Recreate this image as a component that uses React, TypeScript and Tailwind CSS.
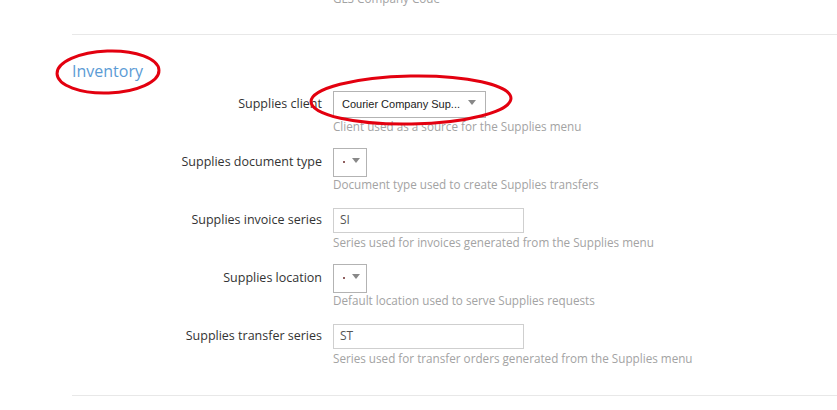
import type { FC, ReactNode } from 'react';

const font = { fontFamily: '"Open Sans", "Liberation Sans", sans-serif' };

const Caret = () => (
  <svg width="8" height="5" viewBox="0 0 8 5" className="shrink-0">
    <path d="M0 0 L8 0 L4 5 Z" fill="#888" />
  </svg>
);

const Row: FC<{ label: string; help: string; children: ReactNode }> = ({ label, help, children }) => (
  <div className="mb-[13px]">
    <div className="flex items-center h-[28px]">
      <div className="w-[251px] pr-[1px] text-right text-[12.5px] text-[#333]">{label}</div>
      <div className="ml-[10px] flex items-center">{children}</div>
    </div>
    <div className="ml-[261px] text-[11.7px] leading-[17px] text-[#a3a3a3]">{help}</div>
  </div>
);

const WideSelect = () => (
  <div className="w-[153px] h-[27px] border border-[#b3b3b3] bg-white flex items-center pl-[8px] pr-[9px]">
    <span className="text-[11px] text-[#222] whitespace-nowrap" style={{ fontFamily: '"Liberation Sans", Arial, sans-serif' }}>
      Courier Company Sup...
    </span>
    <span className="ml-auto -mt-[3px]">
      <Caret />
    </span>
  </div>
);

const SmallSelect = () => (
  <div className="w-[34px] h-[29px] border border-[#b3b3b3] bg-white flex items-start pt-[9px] pl-[9px] gap-[7px]">
    <span className="mt-[3px] w-[2px] h-[2px] bg-[#6b2b2b] rounded-full" />
    <Caret />
  </div>
);

const TextInput: FC<{ value: string }> = ({ value }) => (
  <div className="w-[191px] h-[25px] border border-[#cfcfcf] bg-white flex items-center pl-[6px] text-[12px] text-[#555]">
    {value}
  </div>
);

const App: FC = () => {
  return (
    <div className="relative w-[837px] h-[410px] overflow-hidden bg-white" style={font}>
      <div className="pl-[72px]">
        <div className="-mt-[10px] ml-[261px] text-[11.7px] leading-[17px] text-[#a3a3a3]">GLS Company Code</div>
        <div className="mt-[27px] border-t border-[#e8e8e8]" />
        <h2 className="mt-[24px] text-[16px] leading-[24px] text-[#5b9bd5]">Inventory</h2>
        <div className="mt-[7px]">
          <Row label="Supplies client" help="Client used as a source for the Supplies menu">
            <WideSelect />
          </Row>
          <Row label="Supplies document type" help="Document type used to create Supplies transfers">
            <SmallSelect />
          </Row>
          <Row label="Supplies invoice series" help="Series used for invoices generated from the Supplies menu">
            <TextInput value="SI" />
          </Row>
          <Row label="Supplies location" help="Default location used to serve Supplies requests">
            <SmallSelect />
          </Row>
          <Row label="Supplies transfer series" help="Series used for transfer orders generated from the Supplies menu">
            <TextInput value="ST" />
          </Row>
        </div>
        <div className="mt-[28px] border-t border-[#e8e8e8]" />
      </div>

      {/* hand-drawn red annotation marks */}
      <svg className="absolute left-0 top-0 pointer-events-none" width="837" height="410">
        <ellipse cx="108" cy="72" rx="51" ry="21" fill="none" stroke="#e3000f" strokeWidth="3" transform="rotate(-2 108 72)" />
        <ellipse cx="411" cy="100" rx="100" ry="24" fill="none" stroke="#e3000f" strokeWidth="3" transform="rotate(-1 411 100)" />
      </svg>
    </div>
  );
};

export default App;
